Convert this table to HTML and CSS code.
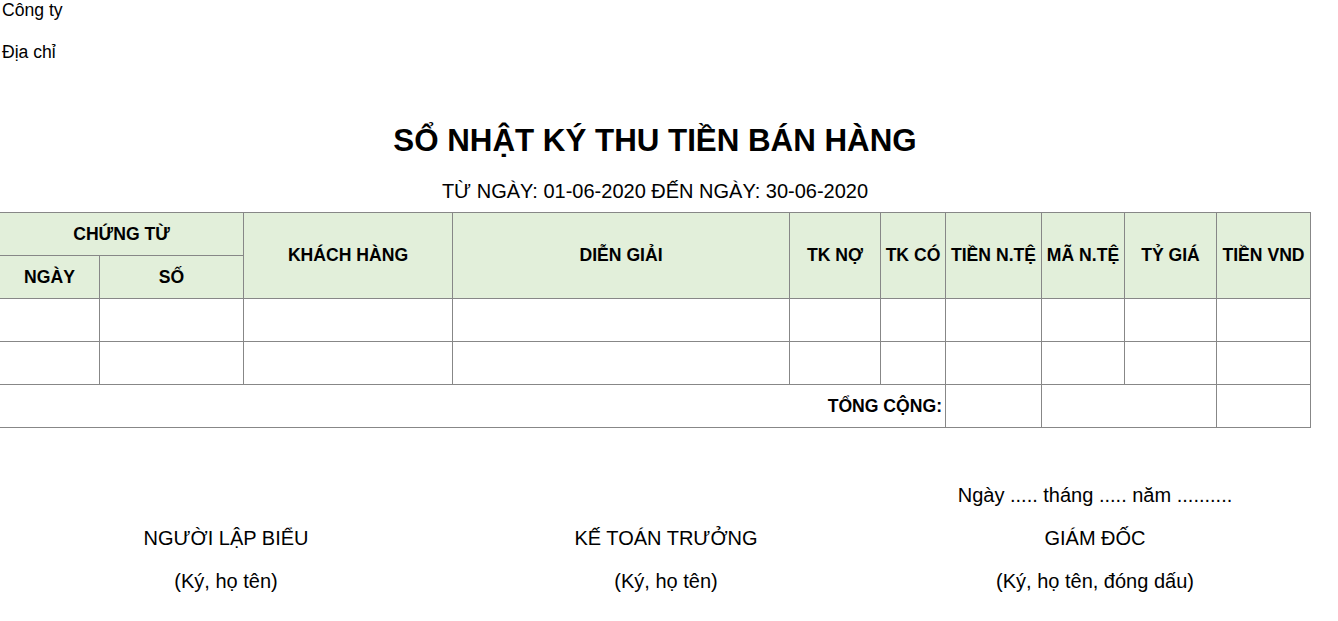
FILE: index.html
```html
<!DOCTYPE html>
<html lang="vi">
<head>
<meta charset="utf-8">
<title>Sổ nhật ký thu tiền bán hàng</title>
<link rel="stylesheet" href="styles.css">
</head>
<body>
<div class="page">
  <div class="company">Công ty</div>
  <div class="address">Địa chỉ</div>
  <h1 class="title">SỔ NHẬT KÝ THU TIỀN BÁN HÀNG</h1>
  <div class="period">TỪ NGÀY: 01-06-2020 ĐẾN NGÀY: 30-06-2020</div>

  <div class="ledger">
    <div class="cell head span-2c">CHỨNG TỪ</div>
    <div class="cell head span-2r">KHÁCH HÀNG</div>
    <div class="cell head span-2r">DIỄN GIẢI</div>
    <div class="cell head span-2r">TK NỢ</div>
    <div class="cell head span-2r">TK CÓ</div>
    <div class="cell head span-2r">TIỀN N.TỆ</div>
    <div class="cell head span-2r">MÃ N.TỆ</div>
    <div class="cell head span-2r">TỶ GIÁ</div>
    <div class="cell head span-2r">TIỀN VND</div>
    <div class="cell head">NGÀY</div>
    <div class="cell head">SỐ</div>

    <div class="cell"></div><div class="cell"></div><div class="cell"></div><div class="cell"></div><div class="cell"></div>
    <div class="cell"></div><div class="cell"></div><div class="cell"></div><div class="cell"></div><div class="cell"></div>

    <div class="cell"></div><div class="cell"></div><div class="cell"></div><div class="cell"></div><div class="cell"></div>
    <div class="cell"></div><div class="cell"></div><div class="cell"></div><div class="cell"></div><div class="cell"></div>

    <div class="cell total-label">TỔNG CỘNG:</div>
    <div class="cell"></div>
    <div class="cell span-2c"></div>
    <div class="cell"></div>
  </div>

  <div class="signatures">
    <div class="sig-date">Ngày ..... tháng ..... năm ..........</div>
    <div class="sig-role">NGƯỜI LẬP BIỂU</div>
    <div class="sig-role">KẾ TOÁN TRƯỞNG</div>
    <div class="sig-role">GIÁM ĐỐC</div>
    <div class="sig-note">(Ký, họ tên)</div>
    <div class="sig-note">(Ký, họ tên)</div>
    <div class="sig-note">(Ký, họ tên, đóng dấu)</div>
  </div>
</div>
</body>
</html>
```

FILE: styles.css
```css
html, body {
  margin: 0;
  padding: 0;
  background: #ffffff;
}

body {
  font-family: "Liberation Sans", Arial, sans-serif;
  color: #000000;
}

.page {
  width: 1310px;
  display: flex;
  flex-direction: column;
}

.company,
.address {
  font-size: 17.6px;
  line-height: 21px;
  padding-left: 2px;
}

.address {
  margin-top: 21px;
}

.title {
  margin: 60px 0 0 0;
  font-size: 31.3px;
  line-height: 36px;
  font-weight: bold;
  text-align: center;
}

.period {
  margin-top: 20px;
  font-size: 20px;
  line-height: 24px;
  text-align: center;
}

.ledger {
  margin-top: 9px;
  margin-left: -1px;
  width: 1310px;
  padding: 1px;
  background: #878787;
  display: grid;
  grid-template-columns: 99px 143px 208px 336px 90px 64px 95px 82px 91px 93px;
  grid-auto-rows: 42px;
  gap: 1px;
}

.cell {
  background: #ffffff;
}

.cell.head {
  background: #e2efda;
  font-weight: bold;
  font-size: 17.6px;
  display: flex;
  align-items: center;
  justify-content: center;
  white-space: nowrap;
}

.span-2c {
  grid-column: span 2;
}

.span-2r {
  grid-row: span 2;
}

.total-label {
  grid-column: span 6;
  display: flex;
  align-items: center;
  justify-content: flex-end;
  padding-right: 3px;
  font-weight: bold;
  font-size: 17.6px;
}

.signatures {
  margin-top: 55px;
  display: grid;
  grid-template-columns: 452px 428px 430px;
  grid-template-rows: 24px 24px 24px;
  row-gap: 19px;
  font-size: 20px;
  line-height: 24px;
  text-align: center;
}

.sig-date {
  grid-column: 3;
}
```
